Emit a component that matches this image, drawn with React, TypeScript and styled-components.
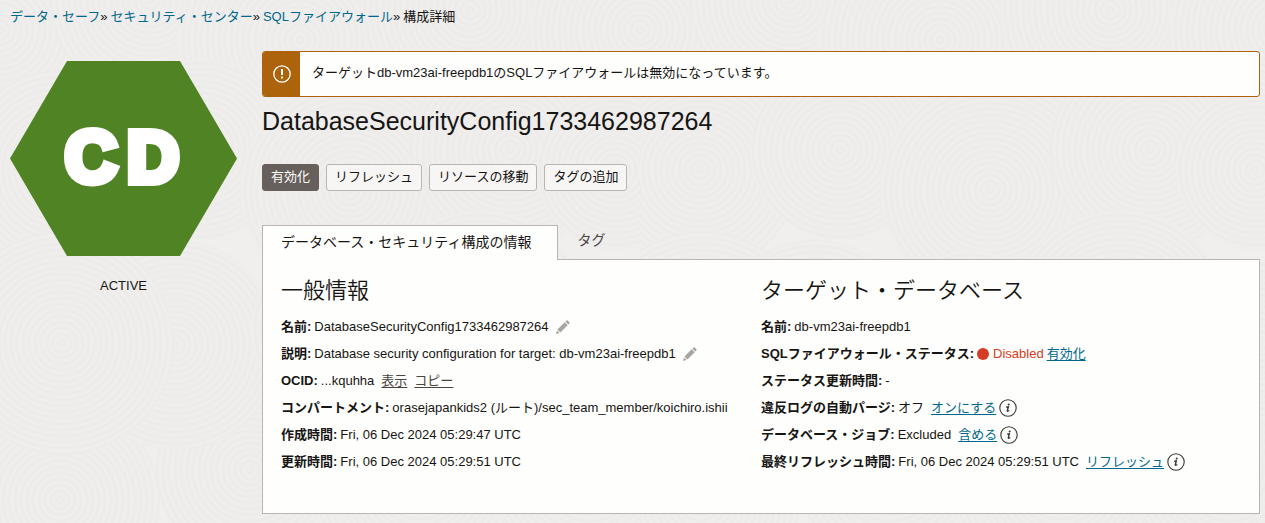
import React from "react";
import styled, { createGlobalStyle } from "styled-components";

const GlobalStyle = createGlobalStyle`
  * { box-sizing: border-box; }
  body {
    margin: 0;
    background: #f0efed;
    color: #161513;
    font: 13px/19px "Liberation Sans", "Noto Sans CJK JP", sans-serif;
  }
  h1, h2, p, ol, dl, dd { margin: 0; padding: 0; }
  button { font: inherit; }
`;

const Page = styled.div`
  position: relative;
  isolation: isolate;
  min-height: 100vh;
  padding: 7px 5px 9px 10px;
`;

const Texture = styled.svg`
  position: absolute;
  inset: 0;
  z-index: -1;
  width: 100%;
  height: 100%;
`;

const Breadcrumb = styled.ol`
  display: flex;
  list-style: none;
`;

const Crumb = styled.li`
  & + &::before {
    content: "»";
    margin: 0 3px 0 0;
  }
`;

const Link = styled.a<{ $quiet?: boolean; $plain?: boolean }>`
  color: ${(p) => (p.$quiet ? "#4a4541" : "#00688c")};
  text-decoration: ${(p) => (p.$plain ? "none" : "underline")};
  text-underline-offset: 2px;
`;

const Layout = styled.div`
  display: grid;
  grid-template-columns: 227px minmax(0, 1fr);
  gap: 25px;
  margin-top: 25px;
`;

const Side = styled.aside`
  display: flex;
  flex-direction: column;
  align-items: center;
  gap: 20px;
  padding-top: 10px;
`;

const Hexagon = styled.svg`
  display: block;
  width: 227px;
  height: 195px;
`;

const Alert = styled.div`
  display: flex;
  height: 46px;
  border: 1px solid #ac630c;
  border-radius: 3px;
  background: #fefefc;
  overflow: hidden;
`;

const AlertIcon = styled.div`
  display: flex;
  align-items: center;
  justify-content: center;
  width: 37px;
  background: #ac630c;
`;

const AlertText = styled.p`
  padding: 11px 12px;
`;

const Title = styled.h1`
  margin-top: 7px;
  font-size: 25px;
  line-height: 34px;
  font-weight: 400;
`;

const Actions = styled.div`
  display: flex;
  gap: 7px;
  margin-top: 26px;
`;

const Action = styled.button<{ $primary?: boolean }>`
  height: 27px;
  padding: 0 8px 2px;
  border: 1px solid ${(p) => (p.$primary ? "#665f5b" : "#bab5b0")};
  border-radius: 3px;
  background: ${(p) => (p.$primary ? "#665f5b" : "#f7f6f4")};
  color: ${(p) => (p.$primary ? "#ffffff" : "#161513")};
`;

const TabList = styled.div`
  display: flex;
  margin-top: 34px;
`;

const Tab = styled.button<{ $active?: boolean }>`
  position: relative;
  height: 35px;
  padding: ${(p) => (p.$active ? "0 26px 2px 18px" : "0 18px 5px")};
  border: 1px solid ${(p) => (p.$active ? "#bab5b0" : "transparent")};
  border-bottom: 0;
  background: ${(p) => (p.$active ? "#fefefc" : "transparent")};
  color: ${(p) => (p.$active ? "#161513" : "#4a4541")};
  font-size: 14px;
  z-index: 1;
`;

const Panel = styled.section`
  display: grid;
  grid-template-columns: 480px minmax(0, 1fr);
  margin-top: -1px;
  padding: 15px 18px 38px;
  border: 1px solid #bab5b0;
  background: #fefefc;
`;

const Heading = styled.h2`
  margin-bottom: 6px;
  font-size: 22px;
  line-height: 32px;
  font-weight: 350;
`;

const Row = styled.div`
  display: flex;
  align-items: center;
  height: 27px;
  white-space: nowrap;
`;

const Label = styled.dt`
  margin-right: 3px;
  font-weight: 700;
`;

const Value = styled.dd`
  display: flex;
  align-items: center;
  gap: 7px;
`;

const Group = styled.span`
  display: flex;
  align-items: center;
  gap: 3px;
`;

const Status = styled.span`
  display: flex;
  align-items: center;
  gap: 4px;
  color: #d63b25;

  &::before {
    content: "";
    width: 12px;
    height: 12px;
    border-radius: 50%;
    background: #d63b25;
  }
`;

const IconButton = styled.button`
  display: flex;
  padding: 1px 0 0;
  border: 0;
  background: none;
`;

const DISCS: [number, number, number][] = [
  [0, 30, 110], [150, 0, 100], [300, 40, 120], [470, 10, 110], [640, 30, 110],
  [60, 170, 100], [200, 150, 90], [350, 190, 110], [510, 150, 100], [615, 170, 80],
  [250, 470, 95], [60, 500, 100], [420, 480, 110], [590, 470, 100],
  [175, 345, 105], [62, 343, 112], [330, 330, 80], [480, 320, 110], [620, 340, 80],
];

function Background() {
  return (
    <Texture aria-hidden="true">
      <defs>
        {DISCS.map(([x, y], i) => (
          <radialGradient key={i} id={`ring${i}`} gradientUnits="userSpaceOnUse" cx={x} cy={y} r="6" spreadMethod="repeat">
            <stop offset="0" stopColor="#f0efed" />
            <stop offset="0.5" stopColor="#ecebe9" />
            <stop offset="1" stopColor="#f0efed" />
          </radialGradient>
        ))}
        <pattern id="rings" width="640" height="540" patternUnits="userSpaceOnUse">
          {DISCS.map(([x, y, r], i) => (
            <circle key={i} cx={x} cy={y} r={r} fill={`url(#ring${i})`} />
          ))}
        </pattern>
      </defs>
      <rect width="100%" height="100%" fill="url(#rings)" />
    </Texture>
  );
}

function EditButton({ label }: { label: string }) {
  return (
    <IconButton type="button" aria-label={label}>
      <svg width="14" height="14" viewBox="0 0 14 14" fill="#aaa5a0">
        <path d="M10.6.6Q11.2 0 11.8.6L13.4 2.2Q14 2.8 13.4 3.4L12.2 4.6 9.4 1.8Z" />
        <path d="M8.7 2.3 11.7 5.3 4.4 12.6 1.4 9.6Z" />
        <path d="M1 10.4 3.6 13 0 14Z" />
      </svg>
    </IconButton>
  );
}

function InfoButton() {
  return (
    <IconButton type="button" aria-label="情報">
      <svg width="18" height="18" viewBox="0 0 18 18">
        <circle cx="9" cy="9" r="8.2" fill="none" stroke="#393632" strokeWidth="1.1" />
        <circle cx="9.7" cy="5.5" r="1" fill="#393632" />
        <path d="M7.3 8.2 9.3 7.8 8.3 11.8Q8.3 12.7 10.3 11.5" fill="none" stroke="#393632" strokeWidth="1.4" />
      </svg>
    </IconButton>
  );
}

function Field({ label, children }: { label: string; children: React.ReactNode }) {
  return (
    <Row>
      <Label>{label}:</Label>
      <Value>{children}</Value>
    </Row>
  );
}

export default function App() {
  return (
    <Page>
      <GlobalStyle />
      <Background />
      <nav>
        <Breadcrumb>
          <Crumb><Link $plain href="#">データ・セーフ</Link></Crumb>
          <Crumb><Link $plain href="#">セキュリティ・センター</Link></Crumb>
          <Crumb><Link $plain href="#">SQLファイアウォール</Link></Crumb>
          <Crumb>構成詳細</Crumb>
        </Breadcrumb>
      </nav>
      <Layout>
        <Side>
          <Hexagon viewBox="0 0 227 195">
            <path d="M57 0H170L227 97.5 170 195H57L0 97.5Z" fill="#4f8323" />
            <text x="55 117" y="121" fill="#fff" stroke="#fff" strokeWidth="8" fontFamily="'Liberation Sans', Arial, sans-serif" fontWeight="700" fontSize="72">CD</text>
          </Hexagon>
          <span>ACTIVE</span>
        </Side>
        <main>
          <Alert role="alert">
            <AlertIcon>
              <svg width="18" height="18" viewBox="0 0 18 18">
                <circle cx="9" cy="9" r="8.2" fill="none" stroke="#fff" strokeWidth="1.3" />
                <path d="M8 4h2v6H8zM8 11.5h2v2H8z" fill="#fff" />
              </svg>
            </AlertIcon>
            <AlertText>ターゲットdb-vm23ai-freepdb1のSQLファイアウォールは無効になっています。</AlertText>
          </Alert>
          <Title>DatabaseSecurityConfig1733462987264</Title>
          <Actions>
            <Action type="button" $primary>有効化</Action>
            <Action type="button">リフレッシュ</Action>
            <Action type="button">リソースの移動</Action>
            <Action type="button">タグの追加</Action>
          </Actions>
          <TabList role="tablist">
            <Tab type="button" role="tab" aria-selected="true" $active>データベース・セキュリティ構成の情報</Tab>
            <Tab type="button" role="tab" aria-selected="false">タグ</Tab>
          </TabList>
          <Panel role="tabpanel">
            <div>
              <Heading>一般情報</Heading>
              <dl>
                <Field label="名前">DatabaseSecurityConfig1733462987264<EditButton label="名前の編集" /></Field>
                <Field label="説明">Database security configuration for target: db-vm23ai-freepdb1<EditButton label="説明の編集" /></Field>
                <Field label="OCID">...kquhha<Link $quiet href="#">表示</Link><Link $quiet href="#">コピー</Link></Field>
                <Field label="コンパートメント">orasejapankids2 (ルート)/sec_team_member/koichiro.ishii</Field>
                <Field label="作成時間">Fri, 06 Dec 2024 05:29:47 UTC</Field>
                <Field label="更新時間">Fri, 06 Dec 2024 05:29:51 UTC</Field>
              </dl>
            </div>
            <div>
              <Heading>ターゲット・データベース</Heading>
              <dl>
                <Field label="名前">db-vm23ai-freepdb1</Field>
                <Field label="SQLファイアウォール・ステータス">
                  <Group><Status>Disabled</Status><Link href="#">有効化</Link></Group>
                </Field>
                <Field label="ステータス更新時間">-</Field>
                <Field label="違反ログの自動パージ">オフ<Group><Link href="#">オンにする</Link><InfoButton /></Group></Field>
                <Field label="データベース・ジョブ">Excluded<Group><Link href="#">含める</Link><InfoButton /></Group></Field>
                <Field label="最終リフレッシュ時間">Fri, 06 Dec 2024 05:29:51 UTC<Group><Link href="#">リフレッシュ</Link><InfoButton /></Group></Field>
              </dl>
            </div>
          </Panel>
        </main>
      </Layout>
    </Page>
  );
}
